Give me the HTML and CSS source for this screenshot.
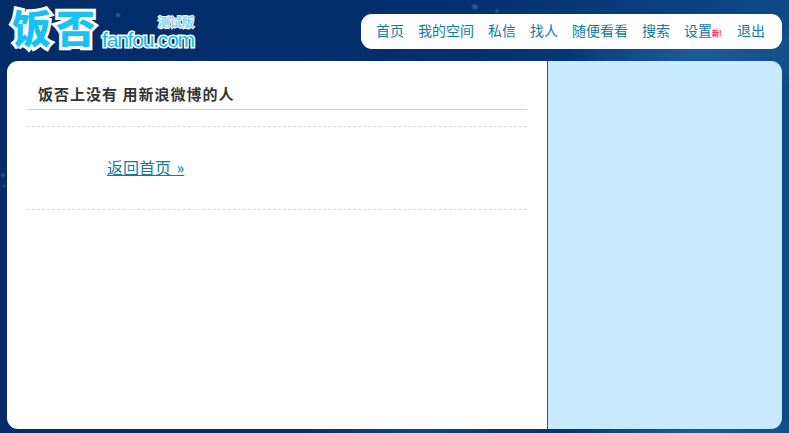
FILE: index.html
```html
<!DOCTYPE html>
<html lang="zh-CN">
<head>
    <meta charset="UTF-8">
    <meta name="viewport" content="width=device-width, initial-scale=1.0">
    <title>饭否</title>
    <link rel="stylesheet" href="styles.css">
</head>
<body>
    <div class="header">
        <a class="logo" href="#">
            <span class="logo-name">饭否</span>
            <span class="logo-side">
                <span class="logo-beta">测试版</span>
                <span class="logo-domain">fanfou.com</span>
            </span>
        </a>
        <ul class="nav">
            <li><a href="#">首页</a></li>
            <li><a href="#">我的空间</a></li>
            <li><a href="#">私信</a></li>
            <li><a href="#">找人</a></li>
            <li><a href="#">随便看看</a></li>
            <li><a href="#">搜索</a></li>
            <li class="nav-new"><a href="#">设置</a><span class="new-tag">新!</span></li>
            <li><a href="#">退出</a></li>
        </ul>
    </div>

    <div class="container">
        <div class="main">
            <h2>饭否上没有 用新浪微博的人</h2>
            <div class="notice">
                <a href="#">返回首页 »</a>
            </div>
        </div>
        <div class="sidebar"></div>
    </div>
</body>
</html>
```

FILE: styles.css
```css
html, body {
    height: 100%;
}

body {
    margin: 0;
    padding: 0 7px 4px;
    box-sizing: border-box;
    display: flex;
    flex-direction: column;
    overflow: hidden;
    font-family: "Noto Sans CJK SC", "Liberation Sans", sans-serif;
    background-color: #04306f;
    background-image:
        radial-gradient(circle at 118px 15px, rgba(120, 180, 230, 0.45) 0, transparent 3px),
        radial-gradient(circle at 148px 47px, rgba(120, 180, 230, 0.3) 0, transparent 3px),
        radial-gradient(circle at 475px 7px, rgba(120, 180, 230, 0.45) 0, transparent 4px),
        radial-gradient(circle at 497px 11px, rgba(120, 180, 230, 0.35) 0, transparent 3px),
        radial-gradient(circle at 3px 175px, rgba(120, 180, 230, 0.35) 0, transparent 3px),
        radial-gradient(circle at 4px 186px, rgba(120, 180, 230, 0.3) 0, transparent 2px),
        radial-gradient(ellipse 130px 45px at 700px 55px, #1d5c98 0, transparent 100%),
        radial-gradient(ellipse 120px 30px at 420px 433px, #0e4a88 0, transparent 100%),
        radial-gradient(ellipse 130px 20px at 700px 433px, #1d5c98 0, transparent 100%),
        linear-gradient(90deg, #032c69 0, #04306f 60%, #0a3f80 85%, #0f4a88 100%);
}

a {
    color: #0f7aa8;
    text-decoration: none;
}

/* Header */
.header {
    height: 61px;
    flex: none;
    display: flex;
    justify-content: space-between;
    align-items: flex-start;
}

.logo {
    display: flex;
    align-items: flex-end;
    margin-left: 2px;
}

.logo-name {
    padding: 3px;
    font-size: 39px;
    line-height: 47px;
    font-weight: 900;
    letter-spacing: 5px;
    color: #18c2f5;
    -webkit-text-stroke: 6px #fff;
    paint-order: stroke fill;
}

.logo-side {
    display: flex;
    flex-direction: column;
    align-items: flex-end;
    margin-left: -1px;
    margin-bottom: 3px;
}

.logo-beta {
    font-size: 12px;
    line-height: 14px;
    font-weight: 700;
    color: #7fd6f5;
    -webkit-text-stroke: 2px #fff;
    paint-order: stroke fill;
}

.logo-domain {
    font-family: "Liberation Sans", sans-serif;
    font-size: 21px;
    line-height: 21px;
    letter-spacing: -1.2px;
    color: #18b8ee;
    -webkit-text-stroke: 3px #fff;
    paint-order: stroke fill;
}

.nav {
    list-style: none;
    margin: 14px 0 0;
    padding: 0 17px 0 15px;
    height: 35px;
    display: flex;
    align-items: center;
    gap: 14px;
    background-color: #fff;
    border-radius: 11px;
}

.nav li {
    margin-bottom: 2px;
    font-size: 14px;
    line-height: 33px;
    white-space: nowrap;
}

.nav-new {
    display: flex;
    align-items: center;
    margin-right: 1px;
}

.new-tag {
    width: 10px;
    font-size: 7px;
    line-height: 10px;
    font-weight: 700;
    color: #e8324a;
    background-color: #fde3e8;
    margin-top: 4px;
}

/* Main content */
.container {
    flex: 1;
    display: flex;
    border-radius: 11px;
    overflow: hidden;
}

.main {
    width: 500px;
    padding: 20px;
    background-color: #fff;
    border-right: 1px solid #1c5a88;
}

.main h2 {
    margin: 0;
    padding: 1px 0 4px 11px;
    height: 23px;
    font-size: 15px;
    line-height: 24px;
    font-weight: 700;
    letter-spacing: 1px;
    color: #333;
    border-bottom: 1px solid #ccc;
}

.notice {
    margin-top: 16px;
    padding: 29px 0 31px 80px;
    height: 22px;
    border-top: 1px dashed #ddd;
    border-bottom: 1px dashed #ddd;
    font-size: 16px;
    line-height: 22px;
}

.notice a {
    word-spacing: 2px;
    text-decoration: underline;
}

.sidebar {
    flex: 1;
    background-color: #c7eaff;
}
```
